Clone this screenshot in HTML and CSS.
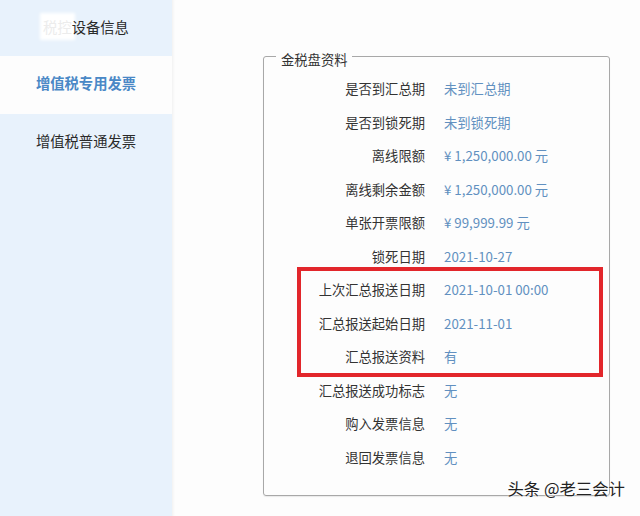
FILE: index.html
```html
<!DOCTYPE html>
<html lang="zh-CN">
<head>
    <meta charset="UTF-8">
    <meta name="viewport" content="width=device-width, initial-scale=1.0">
    <title>金税盘资料</title>
    <link rel="stylesheet" href="styles.css">
</head>
<body>
    <div class="page">
        <div class="sidebar">
            <div class="nav-item first"><span class="blot">税控</span>设备信息</div>
            <div class="nav-item active">增值税专用发票</div>
            <div class="nav-item">增值税普通发票</div>
        </div>

        <div class="main">
            <fieldset class="panel">
                <legend>金税盘资料</legend>
                <div class="row"><span class="label">是否到汇总期</span><span class="value">未到汇总期</span></div>
                <div class="row"><span class="label">是否到锁死期</span><span class="value">未到锁死期</span></div>
                <div class="row"><span class="label">离线限额</span><span class="value">¥ 1,250,000.00 元</span></div>
                <div class="row"><span class="label">离线剩余金额</span><span class="value">¥ 1,250,000.00 元</span></div>
                <div class="row"><span class="label">单张开票限额</span><span class="value">¥ 99,999.99 元</span></div>
                <div class="row"><span class="label">锁死日期</span><span class="value">2021-10-27</span></div>
                <div class="mark">
                    <div class="row"><span class="label">上次汇总报送日期</span><span class="value">2021-10-01 00:00</span></div>
                    <div class="row"><span class="label">汇总报送起始日期</span><span class="value">2021-11-01</span></div>
                    <div class="row"><span class="label">汇总报送资料</span><span class="value">有</span></div>
                </div>
                <div class="row"><span class="label">汇总报送成功标志</span><span class="value">无</span></div>
                <div class="row"><span class="label">购入发票信息</span><span class="value">无</span></div>
                <div class="row"><span class="label">退回发票信息</span><span class="value">无</span></div>
            </fieldset>
            <div class="watermark">头条 @老三会计</div>
        </div>
    </div>
</body>
</html>
```

FILE: styles.css
```css
body {
    margin: 0;
    font-family: "Noto Sans CJK SC", "Noto Sans", sans-serif;
    color: #333;
    background: #fdfdfd;
}
.page {
    display: flex;
    height: 516px;
    overflow: hidden;
}
.sidebar {
    width: 172px;
    flex-shrink: 0;
    background: #e8f2fc;
}
.nav-item {
    height: 58px;
    box-sizing: border-box;
    padding-bottom: 5px;
    display: flex;
    align-items: center;
    justify-content: center;
    font-size: 14.3px;
    color: #2a2a2a;
}
.nav-item.first {
    height: 56px;
    padding-bottom: 3px;
}
.nav-item.active {
    background: #fdfdfd;
    color: #4a88c6;
    font-weight: bold;
}
/* smudged-out part of the first menu entry */
.blot {
    color: #ececec;
    background: #fff;
    box-shadow: 0 0 3px 3px #fff;
}
.main {
    flex: 1;
    position: relative;
    padding-top: 43px;
    box-shadow: inset 3px 0 3px -2px rgba(0, 0, 0, 0.06);
}
.panel {
    margin: 0 30px 0 91px;
    padding: 3px 0 21px;
    border: 1px solid #a8a8a8;
    border-radius: 3px;
    box-shadow: 0 1px 1px rgba(0, 0, 0, 0.08);
}
.panel legend {
    margin-left: 12px;
    padding: 8px 5px 0;
    font-size: 13.3px;
    line-height: 18px;
    color: #333;
}
.row {
    display: flex;
    align-items: center;
    height: 33.5px;
    font-size: 13.3px;
}
.label {
    width: 161px;
    text-align: right;
    color: #333;
}
.value {
    margin-left: 19px;
    color: #6190c0;
}
.mark {
    position: relative;
}
.mark::after {
    content: "";
    position: absolute;
    top: -6px;
    bottom: -3px;
    left: 33px;
    right: 6px;
    border: 4px solid #e2262b;
}
.watermark {
    position: absolute;
    right: 15px;
    bottom: 16px;
    font-size: 16.4px;
    color: #222;
    text-shadow: 0 0 2px #fff, 0 0 2px #fff;
}
```
